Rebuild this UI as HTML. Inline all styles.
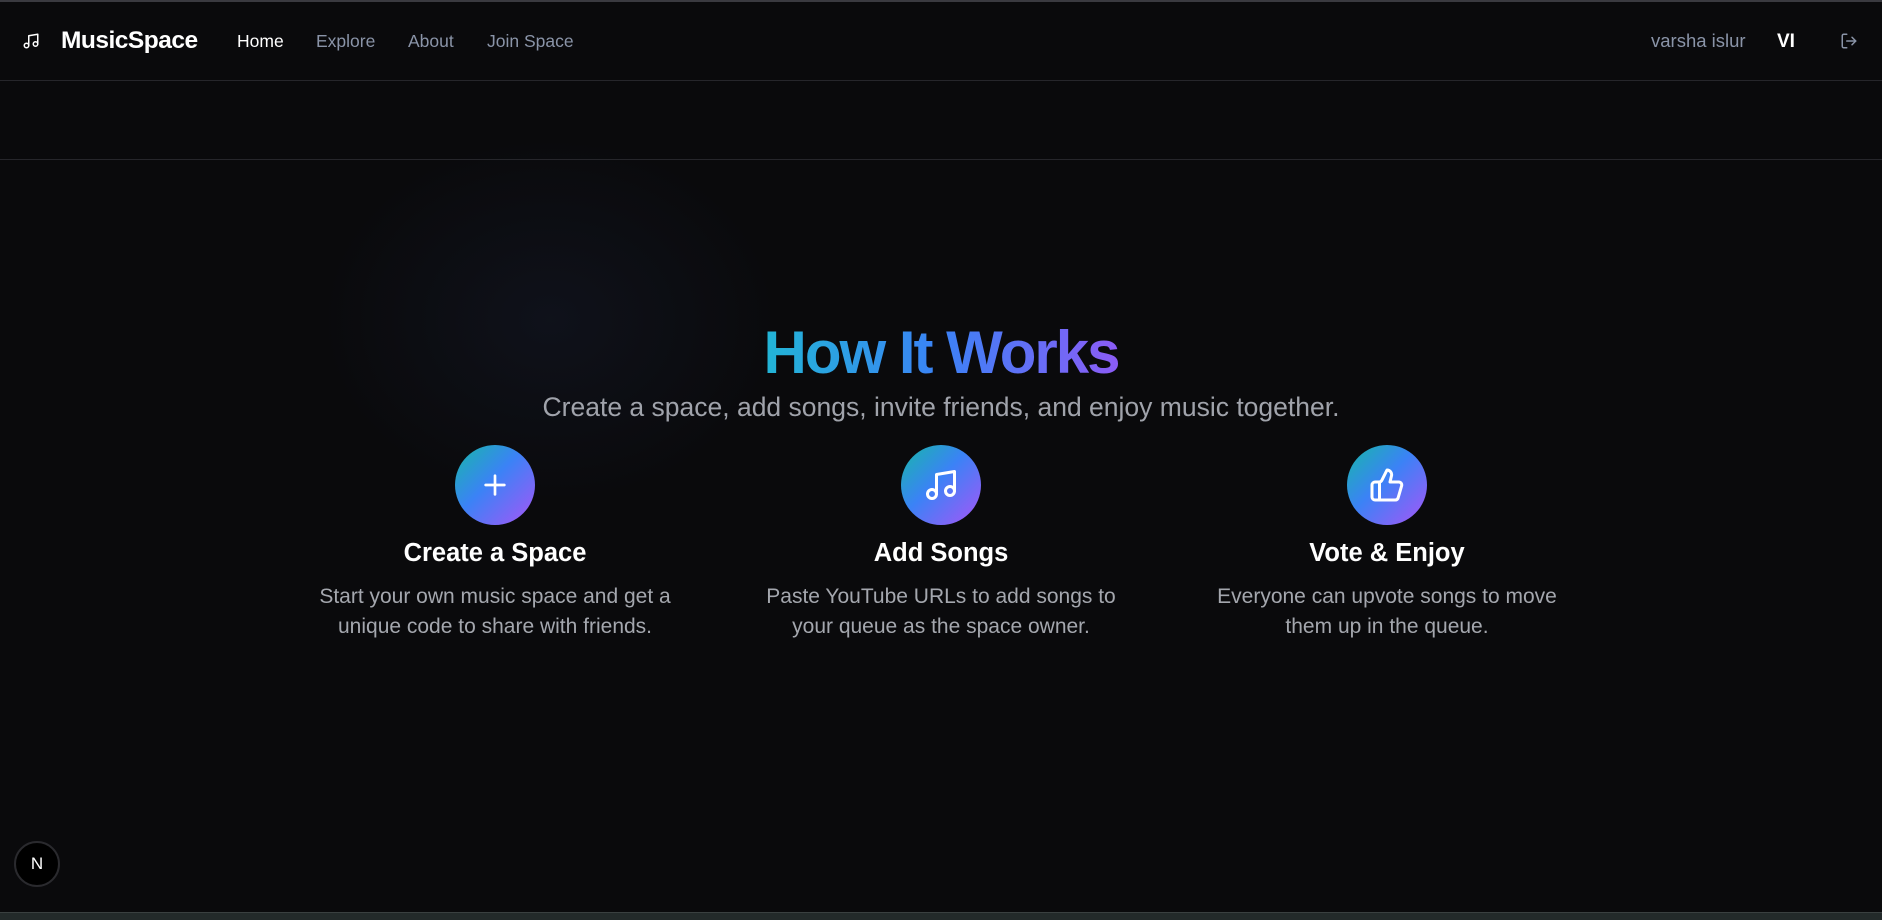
<!DOCTYPE html>
<html><head><meta charset="utf-8"><style>
*{margin:0;padding:0;box-sizing:border-box}
body{width:1882px;height:920px;background:#0a0a0c;font-family:"Liberation Sans",sans-serif;position:relative;overflow:hidden;color:#fff}
.top{position:absolute;left:0;top:0;width:100%;height:2px;background:#3a3a40}
.glow{position:absolute;left:300px;top:120px;width:500px;height:400px;background:radial-gradient(ellipse at center,rgba(30,40,70,0.25),rgba(10,10,12,0) 65%)}
.line{position:absolute;left:0;width:100%;height:1px;background:#26262b}
.nav{position:absolute;top:0;left:0;width:100%;height:80px}
.nav span{position:absolute;top:30px;font-size:17.5px;color:#8a94a8;line-height:22px}
.brand{font-weight:bold;font-size:24.5px!important;color:#fff!important;top:30px!important;letter-spacing:-0.5px}
h1{position:absolute;top:318px;left:0;width:1882px;text-align:center;font-size:60px;font-weight:bold;letter-spacing:-2px;line-height:70px}
h1 span{background:linear-gradient(90deg,#22b5d6,#3b82f6 50%,#8b5cf6);-webkit-background-clip:text;background-clip:text;color:transparent}
.sub{position:absolute;top:392px;width:1882px;text-align:center;font-size:26.5px;color:#a0a3ab}
.col{position:absolute;top:445px;width:440px;text-align:center}
.circ{width:80px;height:80px;border-radius:50%;margin:0 auto;background:linear-gradient(135deg,#16b8a8 0%,#3b82f6 45%,#a855f7 100%);display:flex;align-items:center;justify-content:center}
.col h3{position:absolute;top:94px;width:100%;font-size:25.5px;font-weight:bold;color:#fff}
.col p{position:absolute;top:137px;width:100%;font-size:21px;line-height:30px;color:#a4a7ae}
.n{position:absolute;left:14px;top:841px;width:46px;height:46px;border-radius:50%;background:#000;border:2px solid #2a2a2e;color:#fff;font-size:17px;display:flex;align-items:center;justify-content:center}
.bot{position:absolute;left:0;top:912px;width:100%;height:8px;background:#232a2a;border-top:1px solid #3a4040}
</style></head><body>
<div class="top"></div>
<div class="glow"></div>
<div class="nav">
<svg style="position:absolute;left:22px;top:32px" width="18" height="18" viewBox="0 0 24 24" fill="none" stroke="#fff" stroke-width="2" stroke-linecap="round" stroke-linejoin="round"><path d="M9 18V5l12-2v13"/><circle cx="6" cy="18" r="3"/><circle cx="18" cy="16" r="3"/></svg>
<span class="brand" style="left:61px">MusicSpace</span>
<span style="left:237px;color:#fff">Home</span>
<span style="left:316px">Explore</span>
<span style="left:408px">About</span>
<span style="left:487px">Join Space</span>
<span style="left:1651px;font-size:18.5px">varsha islur</span>
<span style="left:1777px;color:#fff;font-weight:bold;font-size:19px;top:31px">VI</span>
<svg style="position:absolute;left:1840px;top:32px" width="18" height="18" viewBox="0 0 24 24" fill="none" stroke="#8a94a8" stroke-width="2" stroke-linecap="round" stroke-linejoin="round"><path d="M9 21H5a2 2 0 0 1-2-2V5a2 2 0 0 1 2-2h4"/><path d="M16 17l5-5-5-5"/><path d="M21 12H9"/></svg>
</div>
<div class="line" style="top:80px"></div>
<div class="line" style="top:159px"></div>
<h1><span>How It Works</span></h1>
<div class="sub">Create a space, add songs, invite friends, and enjoy music together.</div>
<div class="col" style="left:275px">
<div class="circ"><svg width="32" height="32" viewBox="0 0 24 24" fill="none" stroke="#fff" stroke-width="2" stroke-linecap="round"><path d="M12 5v14M5 12h14"/></svg></div>
<h3>Create a Space</h3>
<p>Start your own music space and get a<br>unique code to share with friends.</p></div>
<div class="col" style="left:721px">
<div class="circ"><svg width="36" height="36" viewBox="0 0 24 24" fill="none" stroke="#fff" stroke-width="2" stroke-linecap="round" stroke-linejoin="round"><path d="M9 18V5l12-2v13"/><circle cx="6" cy="18" r="3"/><circle cx="18" cy="16" r="3"/></svg></div>
<h3>Add Songs</h3>
<p>Paste YouTube URLs to add songs to<br>your queue as the space owner.</p></div>
<div class="col" style="left:1167px">
<div class="circ"><svg width="36" height="36" viewBox="0 0 24 24" fill="none" stroke="#fff" stroke-width="2" stroke-linecap="round" stroke-linejoin="round"><path d="M7 10v12"/><path d="M15 5.88L14 10h5.83a2 2 0 0 1 1.92 2.56l-2.33 8A2 2 0 0 1 17.5 22H4a2 2 0 0 1-2-2v-8a2 2 0 0 1 2-2h2.76a2 2 0 0 0 1.79-1.11L12 2a3.13 3.13 0 0 1 3 3.88Z"/></svg></div>
<h3>Vote &amp; Enjoy</h3>
<p>Everyone can upvote songs to move<br>them up in the queue.</p></div>
<div class="n">N</div>
<div class="bot"></div>
</body></html>
